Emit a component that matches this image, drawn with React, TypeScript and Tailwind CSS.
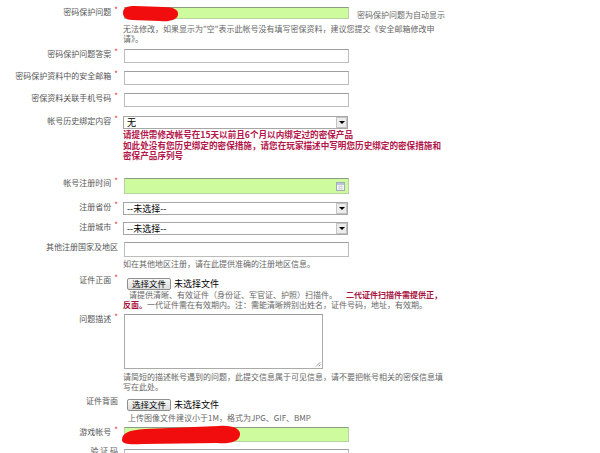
import React from "react";
import clsx from "clsx";

const Star = () => (
  <span className="relative -top-[2px] ml-[3px] text-[#e03030]">*</span>
);

const Row = ({
  label,
  star,
  labelClass,
  className,
  children,
}: {
  label: string;
  star?: boolean;
  labelClass?: string;
  className?: string;
  children: React.ReactNode;
}) => (
  <div className={clsx("flex items-start", className)}>
    <div
      className={clsx(
        "h-[10px] w-[123px] shrink-0 whitespace-nowrap pr-[5px] text-right leading-[10px] text-[#555]",
        labelClass
      )}
    >
      {label}
      {star && <Star />}
    </div>
    <div className="flex-1">{children}</div>
  </div>
);

const TextBox = ({
  green,
  className,
  children,
}: {
  green?: boolean;
  className?: string;
  children?: React.ReactNode;
}) => (
  <div
    className={clsx(
      "relative ml-[1px] w-[225px] shrink-0 border",
      green
        ? "border-[#b7d3a2] border-t-[#8c9c82] bg-[#cdfb9e]"
        : "border-[#bcbcbc] border-t-[#9e9e9e] bg-white",
      className
    )}
  >
    {children}
  </div>
);

const Select = ({ value }: { value: string }) => (
  <div className="flex h-[13px] w-[225px] items-center justify-between border border-[#a7a7a7] bg-white pl-[3px] text-[9px] leading-none text-black">
    <span>{value}</span>
    <span className="flex h-full w-[11px] items-center justify-center border border-[#c4c4c4] bg-[#ececec]">
      <span className="h-0 w-0 border-x-[3px] border-t-[3px] border-x-transparent border-t-black" />
    </span>
  </div>
);

const FileInput = () => (
  <div className="ml-[4px] flex items-center gap-[3px] text-[9px] leading-none text-black">
    <span className="flex h-[12px] items-center rounded-[2px] border border-[#8f8f8f] bg-linear-to-b from-[#f7f7f7] to-[#dcdcdc] px-[4px] text-[8.5px]">
      选择文件
    </span>
    <span>未选择文件</span>
  </div>
);

export default function App() {
  return (
    <div className="h-[453px] w-[600px] overflow-hidden bg-white pt-[7px] font-['Noto_Sans_CJK_SC','Liberation_Sans',sans-serif] text-[8px] text-[#666]">
      <Row label="密码保护问题" star>
        <div className="flex items-start">
          <TextBox green className="h-[12px]">
            <svg
              className="absolute -left-[3px] -top-[3px] overflow-visible"
              width="58"
              height="17"
              viewBox="0 0 58 17"
            >
              <path
                d="M1 8 C1 2 6 1 13 1 L42 2 C52 2 57 5 56 10 C55 15 47 17 38 16 L10 15 C4 15 1 12 1 8 Z"
                fill="#f10d0d"
              />
            </svg>
          </TextBox>
          <span className="ml-[8px] mt-[3px] whitespace-nowrap leading-[10px]">
            密码保护问题为自动显示
          </span>
        </div>
        <div className="mt-[4px] whitespace-nowrap leading-[10px]">
          无法修改，如果显示为"空"表示此帐号没有填写密保资料，建议您提交《安全邮箱修改申
          <br />
          请》。
        </div>
      </Row>

      <Row label="密码保护问题答案" star className="mt-[5px]">
        <TextBox className="h-[14px]" />
      </Row>

      <Row label="密码保护资料中的安全邮箱" star className="mt-[8px]">
        <TextBox className="h-[14px]" />
      </Row>

      <Row label="密保资料关联手机号码" star className="mt-[8px]">
        <TextBox className="h-[14px]" />
      </Row>

      <Row label="帐号历史绑定内容" star className="mt-[9px]">
        <Select value="无" />
        <div className="whitespace-nowrap text-[8.6px] font-bold leading-[10.5px] text-[#b2164a]">
          请提供需修改帐号在15天以前且6个月以内绑定过的密保产品
          <br />
          如此处没有您历史绑定的密保措施，请您在玩家描述中写明您历史绑定的密保措施和
          <br />
          密保产品序列号
        </div>
      </Row>

      <Row label="帐号注册时间" star className="mt-[17px]">
        <TextBox green className="h-[16px]">
          <svg
            className="absolute right-[3px] top-[3px]"
            width="9"
            height="9"
            viewBox="0 0 9 9"
          >
            <rect x="0.5" y="0.5" width="8" height="8" fill="#f2f4f6" stroke="#a3adb8" />
            <rect x="1" y="1" width="7" height="2" fill="#b9c6d3" />
            <path d="M2 4.5 H7 M2 6.5 H7 M3.5 3.5 V8 M5.5 3.5 V8" stroke="#cfd6dd" strokeWidth="0.8" />
          </svg>
        </TextBox>
      </Row>

      <Row label="注册省份" star className="mt-[8px]">
        <Select value="--未选择--" />
      </Row>

      <Row label="注册城市" star className="mt-[7px]">
        <Select value="--未选择--" />
      </Row>

      <Row label="其他注册国家及地区" className="mt-[7px]">
        <TextBox className="h-[15px]" />
        <div className="mt-[2px] whitespace-nowrap leading-[10px]">
          如在其他地区注册，请在此提供准确的注册地区信息。
        </div>
      </Row>

      <Row label="证件正面" star labelClass="-mt-[3px]" className="mt-[9px]">
        <FileInput />
        <div className="whitespace-nowrap leading-[10px]">
          <div className="pl-[6px]">
            请提供清晰、有效证件（身份证、军官证、护照）扫描件。
            <span className="ml-[9px] font-bold text-[#a8143f]">
              二代证件扫描件需提供正，
            </span>
          </div>
          <div>
            <span className="font-bold text-[#a8143f]">反面。</span>
            一代证件需在有效期内。注：需能清晰辨别出姓名，证件号码，地址，有效期。
          </div>
        </div>
      </Row>

      <Row label="问题描述" star className="mt-[4px]">
        <div className="relative ml-[1px] h-[55px] w-[199px] border border-[#aaaaaa] border-t-[#999999] bg-white">
          <svg
            className="absolute bottom-[1px] right-[1px]"
            width="6"
            height="6"
            viewBox="0 0 6 6"
          >
            <path d="M5.5 1 L1 5.5 M5.5 3.5 L3.5 5.5" stroke="#8a8a8a" strokeWidth="0.8" />
          </svg>
        </div>
        <div className="mt-[3px] whitespace-nowrap leading-[10px]">
          请简短的描述帐号遇到的问题，此提交信息属于可见信息，请不要把帐号相关的密保信息填
          <br />
          写在此处。
        </div>
      </Row>

      <Row label="证件背面" labelClass="-mt-[3px]" className="mt-[7px]">
        <FileInput />
        <div className="mt-[2px] whitespace-nowrap pl-[5px] leading-[10px]">
          上传图像文件建议小于1M，格式为JPG、GIF、BMP
        </div>
      </Row>

      <Row label="游戏帐号" star className="mt-[4px]">
        <TextBox green className="h-[15px]">
          <svg
            className="absolute -left-[4px] -top-[3px] overflow-visible"
            width="122"
            height="20"
            viewBox="0 0 122 20"
          >
            <path
              d="M1 15 C1 8 8 5 24 4 L98 1 C112 0 120 4 119 10 C118 17 108 19 96 18 L22 19 C8 20 1 19 1 15 Z"
              fill="#f10d0d"
            />
          </svg>
        </TextBox>
      </Row>

      <Row label="验 证 码" labelClass="-mt-[3px]" className="mt-[7px]">
        <TextBox className="h-[15px]" />
      </Row>
    </div>
  );
}
